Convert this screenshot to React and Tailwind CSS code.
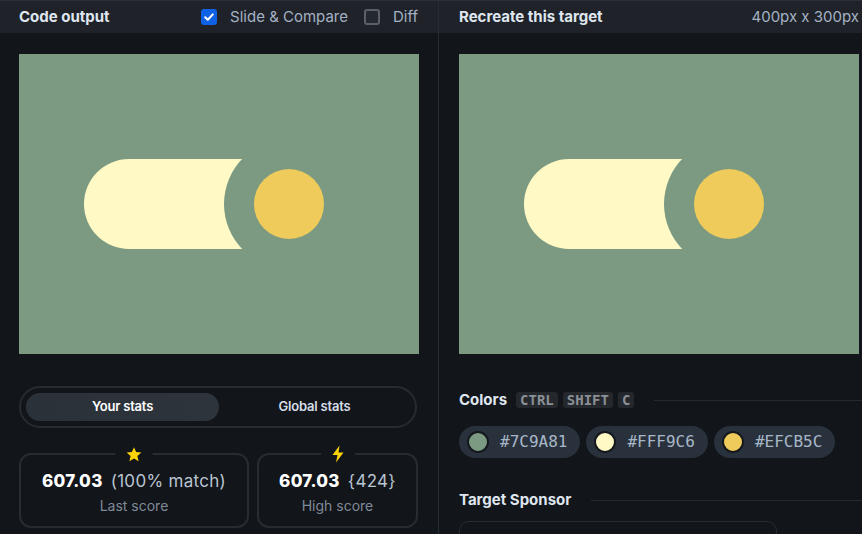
import React from "react";

function Drawing() {
  return (
    <svg width="400" height="300" viewBox="0 0 400 300" className="block">
      <defs>
        <mask id="cut">
          <rect x="0" y="0" width="400" height="300" fill="white" />
          <circle cx="270" cy="150" r="65" fill="black" />
        </mask>
      </defs>
      <rect x="0" y="0" width="400" height="300" fill="#7C9A81" />
      <g mask="url(#cut)">
        <path d="M110 105 H280 V195 H110 A45 45 0 0 1 110 105 Z" fill="#FFF9C6" />
      </g>
      <circle cx="270" cy="150" r="35" fill="#EFCB5C" />
    </svg>
  );
}

function Check({ on }) {
  return on ? (
    <span className="shrink-0 w-4 h-4 rounded-[3px] bg-[#0f62e6] flex items-center justify-center">
      <svg width="12" height="12" viewBox="0 0 12 12">
        <path d="M2.2 6.2 L4.8 8.8 L9.8 3.4" stroke="white" strokeWidth="2" fill="none" strokeLinecap="round" strokeLinejoin="round" />
      </svg>
    </span>
  ) : (
    <span className="shrink-0 block w-4 h-4 rounded-[3px] border-2 border-[#5a5f68] bg-[#24282f]" />
  );
}

function StatCard({ icon, value, extra, label, width }) {
  return (
    <div className={`relative ${width} h-[75px] rounded-[12px] border-2 border-[#272c33] flex flex-col items-center justify-center`}>
      <div className="absolute -top-[12px] left-1/2 -translate-x-1/2 px-[10px] bg-[#121519] flex items-center justify-center h-[22px]">
        {icon}
      </div>
      <div className="flex items-baseline gap-[8px] mt-[4px]">
        <span className="text-[17px] font-extrabold text-white tracking-[0.3px]">{value}</span>
        <span className="text-[17px] text-[#b9c4d2] tracking-[0.3px]">{extra}</span>
      </div>
      <div className="text-[14px] text-[#7f8a99] mt-[1px]">{label}</div>
    </div>
  );
}

function Chip({ color, text }) {
  return (
    <div className="h-[32px] rounded-full bg-[#29323c] flex items-center pl-[8px] pr-[13px] gap-[11px]">
      <span className="w-[22px] h-[22px] rounded-full border-2 border-[#15191d]" style={{ backgroundColor: color }} />
      <span className="text-[16px] text-[#a8b7c8] font-['DejaVu_Sans_Mono',monospace]">{text}</span>
    </div>
  );
}

function Kbd({ children }) {
  return (
    <span className="h-[16px] px-[4px] rounded-[3px] bg-[#24272c] text-[14px] font-bold text-[#8b9096] font-['DejaVu_Sans_Mono',monospace] flex items-center leading-none">
      {children}
    </span>
  );
}

export default function App() {
  return (
    <div className="w-[862px] h-[534px] overflow-hidden bg-[#121519] flex font-['Inter',sans-serif]">
      <div className="w-[439px] shrink-0 border-r border-[#242c36] flex flex-col">
        <div className="shrink-0 h-[33px] bg-[#1f2329] border-t border-[#2b3038] flex items-center pl-[19px] pr-[20px]">
          <span className="text-[15px] font-bold text-[#dfe6ef]">Code output</span>
          <div className="ml-auto flex items-center">
            <Check on />
            <span className="ml-[13px] text-[15px] text-[#a4b2c4]">Slide &amp; Compare</span>
            <span className="ml-[16px]"><Check /></span>
            <span className="ml-[13px] text-[15px] text-[#a4b2c4]">Diff</span>
          </div>
        </div>
        <div className="shrink-0 pl-[19px] pt-[21px]">
          <Drawing />
        </div>
        <div className="shrink-0 ml-[19px] mr-[21px] mt-[32px] h-[42px] rounded-full border-2 border-[#262c33] flex items-center px-[5px]">
          <div className="w-[193px] h-[28px] rounded-full bg-gradient-to-r from-[#2b3139] to-[#2e343c] flex items-center justify-center text-[13px] font-semibold text-white tracking-[-0.2px]">
            Your stats
          </div>
          <div className="flex-1 flex items-center justify-center text-[13px] font-semibold text-[#d5dde8] tracking-[-0.2px]">
            Global stats
          </div>
        </div>
        <div className="shrink-0 flex gap-[8px] ml-[19px] mt-[25px]">
          <StatCard
            width="w-[230px]"
            value="607.03"
            extra="(100% match)"
            label="Last score"
            icon={
              <svg width="17" height="17" viewBox="0 0 24 24">
                <path d="M12 1.8 L15 8.6 L22.4 9.3 L16.8 14.2 L18.5 21.5 L12 17.7 L5.5 21.5 L7.2 14.2 L1.6 9.3 L9 8.6 Z" fill="#fcd307" />
              </svg>
            }
          />
          <StatCard
            width="w-[161px]"
            value="607.03"
            extra="{424}"
            label="High score"
            icon={
              <svg width="14" height="18" viewBox="0 0 14 18">
                <path d="M8.5 0.5 L1.5 10 H6.5 L5 17.5 L12.5 7.5 H7.5 Z" fill="#fcd307" />
              </svg>
            }
          />
        </div>
      </div>
      <div className="flex-1 flex flex-col min-w-0">
        <div className="shrink-0 h-[33px] bg-[#1f2329] border-t border-[#2b3038] flex items-center pl-[20px] pr-[3px]">
          <span className="text-[15px] font-bold text-[#dfe6ef]">Recreate this target</span>
          <span className="ml-auto text-[15px] text-[#a4b2c4]">400px x 300px</span>
        </div>
        <div className="shrink-0 pl-[20px] pt-[21px]">
          <Drawing />
        </div>
        <div className="shrink-0 flex items-center pl-[20px] mt-[36px] h-[20px]">
          <span className="text-[15px] font-bold text-[#dfe6ef]">Colors</span>
          <div className="flex gap-[5px] ml-[9px]">
            <Kbd>CTRL</Kbd>
            <Kbd>SHIFT</Kbd>
            <Kbd>C</Kbd>
          </div>
          <div className="flex-1 h-px bg-[#262a30] ml-[20px]" />
        </div>
        <div className="shrink-0 flex gap-[6px] pl-[20px] mt-[16px]">
          <Chip color="#7C9A81" text="#7C9A81" />
          <Chip color="#FFF9C6" text="#FFF9C6" />
          <Chip color="#EFCB5C" text="#EFCB5C" />
        </div>
        <div className="shrink-0 flex items-center pl-[20px] mt-[32px] h-[20px]">
          <span className="text-[15px] font-bold text-[#dfe6ef]">Target Sponsor</span>
          <div className="flex-1 h-px bg-[#262a30] ml-[20px]" />
        </div>
        <div className="shrink-0 ml-[20px] mt-[11px] w-[318px] h-[40px] rounded-[10px] border border-[#272c33]" />
      </div>
    </div>
  );
}
